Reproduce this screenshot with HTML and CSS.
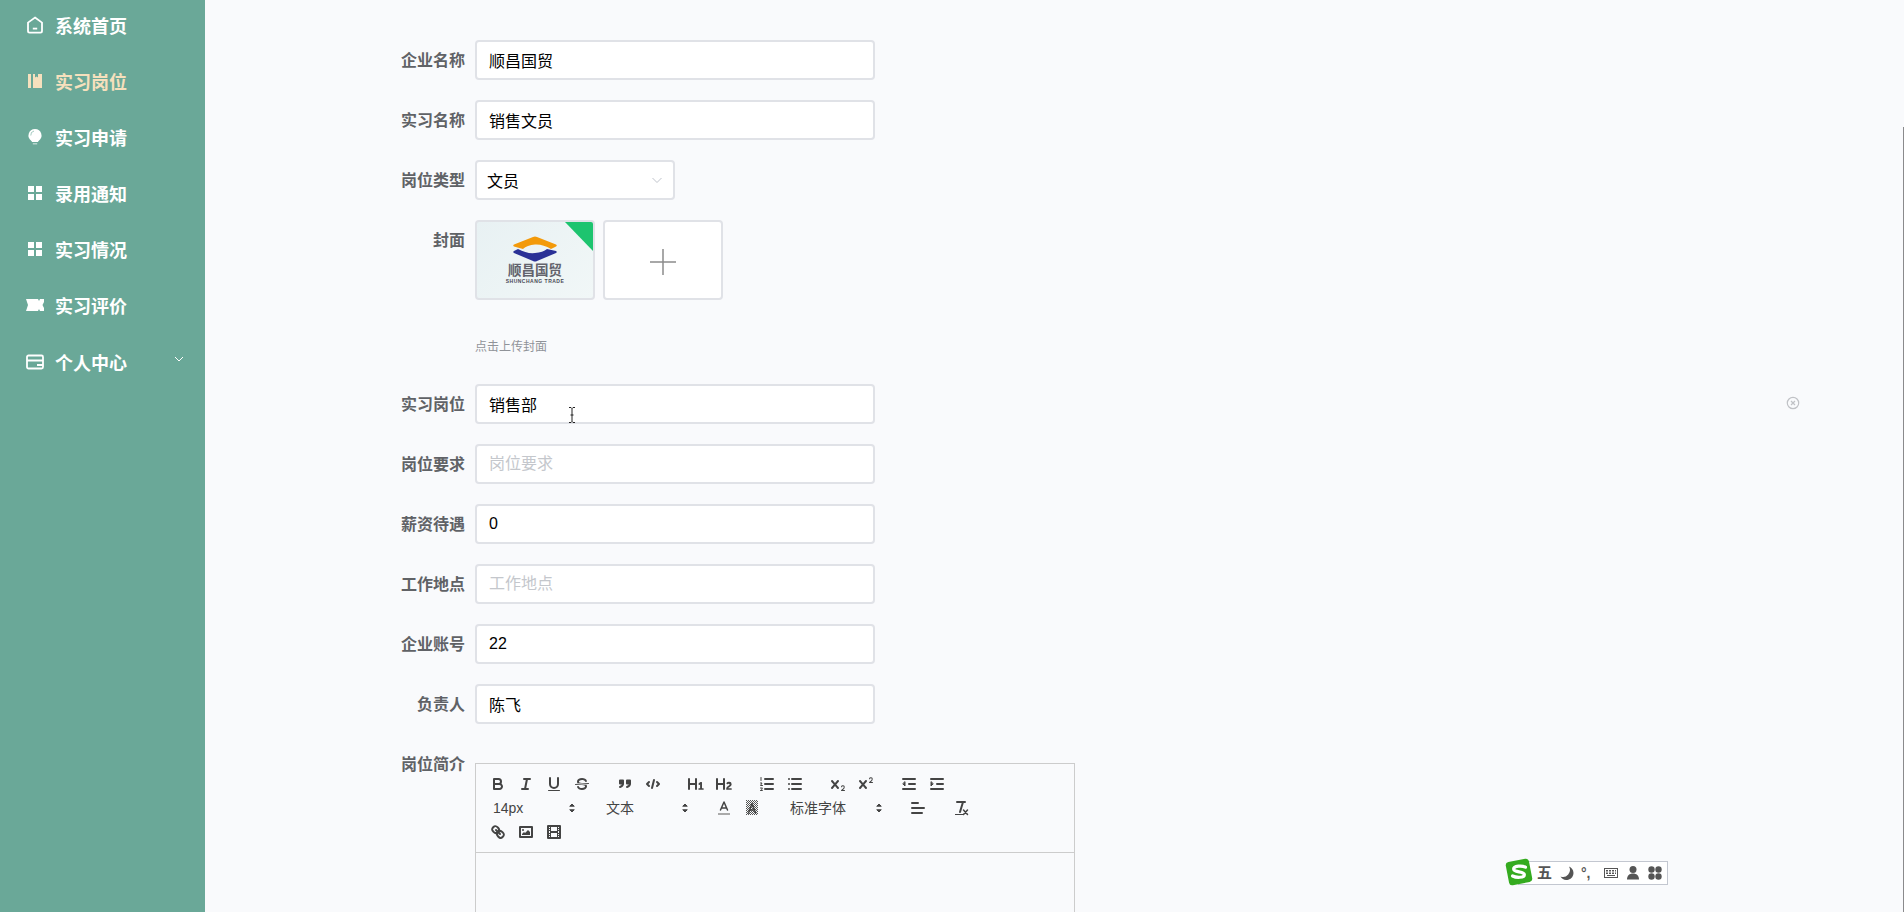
FILE: index.html
```html
<!DOCTYPE html>
<html lang="zh-CN">
<head>
    <meta charset="UTF-8">
    <meta name="viewport" content="width=device-width, initial-scale=1.0">
    <title>实习岗位</title>
    <link rel="stylesheet" href="styles.css">
</head>
<body>
    <div class="app">
        <aside class="sidebar">
            <a class="menu-item">
                <svg class="menu-icon" viewBox="0 0 18 18"><path class="icon-line" d="M9 1.500 16 6.600V15a1.600 1.600 0 0 1-1.600 1.600H3.600A1.600 1.600 0 0 1 2 15V6.600Z"/><path class="icon-line" d="M6.800 12.600h4.400"/></svg>
                <span>系统首页</span>
            </a>
            <a class="menu-item active">
                <svg class="menu-icon" viewBox="0 0 18 18"><path class="icon-solid" d="M2 2h3v14H2ZM7 2h2v3.500l1.500-1 1.500 1V2h4v14H7Z"/></svg>
                <span>实习岗位</span>
            </a>
            <a class="menu-item">
                <svg class="menu-icon" viewBox="0 0 18 18"><path class="icon-solid" d="M9 1a6.500 6.500 0 0 1 3.600 11.900c-.4.300-.6.700-.6 1.100H6c0-.4-.2-.8-.6-1.100A6.500 6.500 0 0 1 9 1ZM6.800 15.500h4.400v.8H6.800Z"/><path class="bulb-shine" d="M4.800 7.500A4.200 4.200 0 0 1 8 3"/></svg>
                <span>实习申请</span>
            </a>
            <a class="menu-item">
                <svg class="menu-icon" viewBox="0 0 18 18"><path class="icon-solid" d="M2 2h6v6H2ZM10 2h6v6h-6ZM2 10h6v6H2ZM10 10h6v6h-6Z"/></svg>
                <span>录用通知</span>
            </a>
            <a class="menu-item">
                <svg class="menu-icon" viewBox="0 0 18 18"><path class="icon-solid" d="M2 2h6v6H2ZM10 2h6v6h-6ZM2 10h6v6H2ZM10 10h6v6h-6Z"/></svg>
                <span>实习情况</span>
            </a>
            <a class="menu-item">
                <svg class="menu-icon" viewBox="0 0 18 18"><path class="icon-solid" d="M0 3h12l1 2 1-2h4v3l-1.500 3L18 12v3h-4l-1-2-1 2H0l2-6Z"/></svg>
                <span>实习评价</span>
            </a>
            <a class="menu-item menu-last">
                <svg class="menu-icon" viewBox="0 0 18 18"><rect class="icon-line" x="1" y="2.500" width="16" height="13" rx="1.500"/><path class="icon-line" d="M1 7.500h16M11 12h6"/></svg>
                <span>个人中心</span>
                <svg class="menu-arrow" viewBox="0 0 12 12"><path d="M2 4l4 4 4-4"/></svg>
            </a>
        </aside>

        <main class="main">
            <form class="form">
                <div class="form-row">
                    <label class="form-label">企业名称</label>
                    <input class="text-input" type="text" value="顺昌国贸">
                </div>
                <div class="form-row">
                    <label class="form-label">实习名称</label>
                    <input class="text-input" type="text" value="销售文员">
                </div>
                <div class="form-row">
                    <label class="form-label">岗位类型</label>
                    <div class="select-box">
                        <span>文员</span>
                        <svg class="select-arrow" viewBox="0 0 12 12"><path d="M1.500 4l4.500 4.500L10.500 4"/></svg>
                    </div>
                </div>
                <div class="form-row cover-row">
                    <label class="form-label">封面</label>
                    <div class="cover-field">
                        <div class="upload-list">
                            <div class="upload-thumb">
                                <svg class="thumb-logo" viewBox="0 0 44 26">
                                    <path fill="#f39a0a" d="M1 8.500 20 1q2-1 4 0l19 7.500q1.500 1 0 2l-5 2.500Q30 8 22 8.500 14 9 10 13L1 10.500q-1.500-1 0-2Z"/>
                                    <path fill="#2a3196" d="M1 15 5 13q9 5 17 4 8-.5 12-4l9 2q1.500 1 0 2L24 25q-2 1-4 0L1 17q-1.500-1 0-2Z"/>
                                </svg>
                                <span class="thumb-name">顺昌国贸</span>
                                <span class="thumb-en">SHUNCHANG TRADE</span>
                                <span class="thumb-flag"></span>
                            </div>
                            <div class="upload-add">
                                <svg class="upload-plus" viewBox="0 0 28 28"><path d="M14 1v26M1 14h26"/></svg>
                            </div>
                        </div>
                        <div class="upload-tip">点击上传封面</div>
                    </div>
                </div>
                <div class="form-row">
                    <label class="form-label">实习岗位</label>
                    <input class="text-input" type="text" value="销售部">
                </div>
                <div class="form-row">
                    <label class="form-label">岗位要求</label>
                    <input class="text-input" type="text" placeholder="岗位要求">
                </div>
                <div class="form-row">
                    <label class="form-label">薪资待遇</label>
                    <input class="text-input" type="text" value="0">
                </div>
                <div class="form-row">
                    <label class="form-label">工作地点</label>
                    <input class="text-input" type="text" placeholder="工作地点">
                </div>
                <div class="form-row">
                    <label class="form-label">企业账号</label>
                    <input class="text-input" type="text" value="22">
                </div>
                <div class="form-row">
                    <label class="form-label">负责人</label>
                    <input class="text-input" type="text" value="陈飞">
                </div>
                <div class="form-row">
                    <label class="form-label">岗位简介</label>
                    <div class="editor">
                        <div class="toolbar">
                            <span class="tool-group">
                                <button type="button" class="tool"><svg viewBox="0 0 18 18"><path class="st" d="M5,4H9.500A2.500,2.500,0,0,1,12,6.500v0A2.500,2.500,0,0,1,9.500,9H5A0,0,0,0,1,5,9V4A0,0,0,0,1,5,4Z"/><path class="st" d="M5,9h5.500A2.500,2.500,0,0,1,13,11.500v0A2.500,2.500,0,0,1,10.500,14H5a0,0,0,0,1,0,0V9A0,0,0,0,1,5,9Z"/></svg></button>
                                <button type="button" class="tool"><svg viewBox="0 0 18 18"><path class="st" d="M7 4h6M5 14h6M8 14l2-10"/></svg></button>
                                <button type="button" class="tool"><svg viewBox="0 0 18 18"><path class="st" d="M5,3V9a4.012,4.012,0,0,0,4,4H9a4.012,4.012,0,0,0,4-4V3"/><rect class="fl" x="3" y="15" width="12" height="1" rx=".5"/></svg></button>
                                <button type="button" class="tool"><svg viewBox="0 0 18 18"><path class="st thin" d="M15.500 8.500 2.500 9.500"/><path class="fl" d="M9.007,8C6.542,7.791,6,7.519,6,6.500,6,5.792,7.283,5,9,5c1.571,0,2.765.679,2.969,1.309a1,1,0,0,0,1.900-.617C13.356,4.106,11.354,3,9,3,6.200,3,4,4.538,4,6.500a3.200,3.200,0,0,0,.5,1.843Z"/><path class="fl" d="M8.984,10C11.457,10.208,12,10.479,12,11.500c0,.708-1.283,1.500-3,1.500-1.571,0-2.765-.679-2.969-1.309a1,1,0,1,0-1.900.617C4.644,13.894,6.646,15,9,15c2.800,0,5-1.538,5-3.500a3.200,3.200,0,0,0-.5-1.843Z"/></svg></button>
                            </span>
                            <span class="tool-group">
                                <button type="button" class="tool"><svg viewBox="0 0 18 18"><rect class="fl st" x="4" y="5.500" width="3" height="3"/><rect class="fl st" x="11" y="5.500" width="3" height="3"/><path class="st" d="M7,8.500c0,2.500-3,3.500-3,3.500M14,8.500c0,2.500-3,3.500-3,3.500"/></svg></button>
                                <button type="button" class="tool"><svg viewBox="0 0 18 18"><path class="st" d="M5 7 3 9l2 2M13 7l2 2-2 2M10 5 8 13"/></svg></button>
                            </span>
                            <span class="tool-group">
                                <button type="button" class="tool"><svg viewBox="0 0 18 18"><path class="fl" d="M10,4V14a1,1,0,0,1-2,0V10H3v4a1,1,0,0,1-2,0V4A1,1,0,0,1,3,4V8H8V4a1,1,0,0,1,2,0Zm6.068,9.209H14.990V7.599a.541.541,0,0,0-.605-.605h-.627a1.011,1.011,0,0,0-.748.297L11.645,8.566a.544.544,0,0,0-.022.858l.286.308a.539.539,0,0,0,.847.033l.099-.088a1.214,1.214,0,0,0,.242-.353h.022s-.011.309-.011.605V13.209H12.041a.541.541,0,0,0-.605.605v.439a.541.541,0,0,0,.605.606h4.027a.541.541,0,0,0,.605-.606v-.439A.541.541,0,0,0,16.068,13.209Z"/></svg></button>
                                <button type="button" class="tool"><svg viewBox="0 0 18 18"><path class="fl" d="M16.740,13.814v.439a.541.541,0,0,1-.605.606H11.855a.584.584,0,0,1-.649-.606V14.013c0-2.905,3.399-3.422,3.399-4.555a.777.777,0,0,0-.847-.781,1.177,1.177,0,0,0-.836.385c-.275.264-.561.374-.858.132l-.429-.341c-.308-.242-.385-.518-.154-.814a2.972,2.972,0,0,1,2.454-1.177,2.454,2.454,0,0,1,2.684,2.409c0,2.453-3.179,2.927-3.278,3.938h2.794A.541.541,0,0,1,16.740,13.814ZM9,3A1,1,0,0,0,8,4V8H3V4A1,1,0,0,0,1,4V14a1,1,0,0,0,2,0V10H8v4a1,1,0,0,0,2,0V4A1,1,0,0,0,9,3Z"/></svg></button>
                            </span>
                            <span class="tool-group">
                                <button type="button" class="tool"><svg viewBox="0 0 18 18"><path class="st" d="M7 4h8M7 9h8M7 14h8"/><path class="st thin" d="M3 2.500v3M2.500 8h1.500l-1.500 2.500h2M2.500 13h2l-1 1.200 1 1.300h-2"/></svg></button>
                                <button type="button" class="tool"><svg viewBox="0 0 18 18"><path class="st" d="M6 4h9M6 9h9M6 14h9M3 4h0M3 9h0M3 14h0"/></svg></button>
                            </span>
                            <span class="tool-group">
                                <button type="button" class="tool"><svg viewBox="0 0 18 18"><path class="fl" d="M15.500,15H13.861a3.858,3.858,0,0,0,1.914-2.975,1.800,1.800,0,0,0-1.600-1.751A1.921,1.921,0,0,0,12.021,11.700a.5.5,0,1,0,.957.291h0a.914.914,0,0,1,1.053-.725.810.810,0,0,1,.744.762c0,1.076-1.170,1.870-1.940,2.431A1.456,1.456,0,0,0,12,15.500a.5.5,0,0,0,.5.5h3A.5.5,0,0,0,15.500,15Z"/><path class="fl" d="M9.650,5.241a1,1,0,0,0-1.409.108L6,7.964,3.759,5.349A1,1,0,0,0,2.241,6.651L4.684,9.500,2.241,12.350a1,1,0,0,0,1.519,1.300L6,11.036l2.241,2.614a1,1,0,0,0,1.518-1.300L7.316,9.500,9.759,6.651A1,1,0,0,0,9.650,5.241Z"/></svg></button>
                                <button type="button" class="tool"><svg viewBox="0 0 18 18"><path class="fl" d="M15.500,7H13.861a4.015,4.015,0,0,0,1.914-2.975,1.800,1.800,0,0,0-1.600-1.751A1.922,1.922,0,0,0,12.021,3.700a.5.5,0,1,0,.957.291.917.917,0,0,1,1.053-.725.810.810,0,0,1,.744.762c0,1.077-1.164,1.925-1.934,2.486A1.423,1.423,0,0,0,12,7.500a.5.5,0,0,0,.5.5h3A.5.5,0,0,0,15.500,7Z"/><path class="fl" d="M9.651,5.241a1,1,0,0,0-1.410.108L6,7.964,3.759,5.349a1,1,0,1,0-1.519,1.300L4.683,9.500,2.241,12.350a1,1,0,1,0,1.519,1.300L6,11.036l2.241,2.615a1,1,0,0,0,1.519-1.300L7.317,9.500,9.759,6.651A1,1,0,0,0,9.651,5.241Z"/></svg></button>
                            </span>
                            <span class="tool-group">
                                <button type="button" class="tool"><svg viewBox="0 0 18 18"><path class="st" d="M3 14h12M3 4h12M9 9h6"/><path class="fl st thin" d="M5 7v4L3 9Z"/></svg></button>
                                <button type="button" class="tool"><svg viewBox="0 0 18 18"><path class="st" d="M3 14h12M3 4h12M9 9h6"/><path class="fl st thin" d="M3 7v4l2-2Z"/></svg></button>
                            </span>
                            <span class="tool-group">
                                <span class="picker">14px<svg viewBox="0 0 18 18"><path class="fl st thin" d="M7 11l2 2 2-2ZM7 7l2-2 2 2Z"/></svg></span>
                                <span class="picker picker-gap">文本<svg viewBox="0 0 18 18"><path class="fl st thin" d="M7 11l2 2 2-2ZM7 7l2-2 2 2Z"/></svg></span>
                            </span>
                            <span class="tool-group">
                                <button type="button" class="tool"><svg viewBox="0 0 18 18"><path class="color-bar" d="M3 15h12"/><path class="st mid" d="M5.500 11 9 3l3.500 8M11.630 9H6.380"/></svg></button>
                                <button type="button" class="tool"><svg viewBox="0 0 18 18"><defs><pattern id="hatch" width="2" height="2" patternUnits="userSpaceOnUse"><rect width="1" height="1" fill="#555"/><rect x="1" y="1" width="1" height="1" fill="#555"/></pattern></defs><rect x="3" y="1" width="12" height="15" fill="url(#hatch)"/><path class="st mid" d="M5.500 14 9 4.500l3.500 9.500M11.630 11H6.380"/></svg></button>
                            </span>
                            <span class="tool-group">
                                <span class="picker picker-font">标准字体<svg viewBox="0 0 18 18"><path class="fl st thin" d="M7 11l2 2 2-2ZM7 7l2-2 2 2Z"/></svg></span>
                            </span>
                            <span class="tool-group">
                                <button type="button" class="tool"><svg viewBox="0 0 18 18"><path class="st" d="M3 9h12M3 14h10M3 4h6"/></svg></button>
                            </span>
                            <span class="tool-group">
                                <button type="button" class="tool"><svg viewBox="0 0 18 18"><path class="st" d="M5 3h8M11 3 8 13"/><rect class="fl" x="3" y="15" width="8" height="1"/><path class="st mid" d="M11.500 11l4 4.500M15.500 11l-4 4.500"/></svg></button>
                            </span>
                            <span class="tool-group">
                                <button type="button" class="tool"><svg viewBox="0 0 18 18"><path class="st" d="M7 7l4 4"/><path class="st" d="M8.900,4.577a3.476,3.476,0,0,1,.36,4.679A3.476,3.476,0,0,1,4.577,8.900C3.185,7.500,2.035,6.400,4.217,4.217S7.500,3.185,8.900,4.577Z"/><path class="st" d="M13.423,9.100a3.476,3.476,0,0,0-4.679-.36,3.476,3.476,0,0,0,.36,4.679c1.392,1.392,2.500,2.542,4.679.36S14.815,10.500,13.423,9.100Z"/></svg></button>
                                <button type="button" class="tool"><svg viewBox="0 0 18 18"><rect class="st" x="3" y="4" width="12" height="10"/><circle class="fl" cx="6" cy="7" r="1"/><path class="fl" d="M5 12v-1l2-2 1 1 3-3 2 2v3Z"/></svg></button>
                                <button type="button" class="tool"><svg viewBox="0 0 18 18"><rect class="st" x="3" y="3" width="12" height="12"/><path class="fl" d="M5 3h1v12H5ZM12 3h1v12h-1ZM5 8h8v2H5ZM3 5h3v1H3ZM3 7h3v1H3ZM3 10h3v1H3ZM3 12h3v1H3ZM12 5h3v1h-3ZM12 7h3v1h-3ZM12 10h3v1h-3ZM12 12h3v1h-3Z"/></svg></button>
                            </span>
                        </div>
                        <div class="editor-body"></div>
                    </div>
                </div>
            </form>
        </main>
    </div>

    <!-- things lying over the page: text cursor, stray clear icon, scrollbar, IME bar -->
    <svg class="text-cursor" viewBox="0 0 8 16"><path d="M1 .5h2l1 1 1-1h2M4 1.500v13M1 15.500h2l1-1 1 1h2M2.500 8h3"/></svg>
    <svg class="clear-icon" viewBox="0 0 14 14"><circle cx="7" cy="7" r="5.700"/><path d="M5 5l4 4M9 5l-4 4"/></svg>
    <div class="scroll-line"></div>
    <div class="ime-bar">
        <svg class="ime-logo" viewBox="0 0 28 28"><rect x="3" y="3" width="22" height="22" rx="3" transform="rotate(-11 14 14)"/><path d="M20 9.500c-3-1.500-11-1.500-11 1.800 0 3.400 10 1.800 10 5.200 0 3-7.500 3-11 1.200"/></svg>
        <span class="ime-wu">五</span>
        <svg class="ime-icon" viewBox="0 0 16 16"><path d="M10 1.500a7 7 0 0 1-8.500 10A7 7 0 0 0 14.500 8c0-3-2-5.500-4.500-6.500Z"/></svg>
        <span class="ime-punct">°,</span>
        <svg class="ime-icon" viewBox="0 0 16 16"><path fill-rule="evenodd" d="M1 3h14v10H1ZM2 4v8h12V4ZM3 5h2v1.500H3ZM6 5h2v1.500H6ZM9 5h2v1.500H9ZM12 5h1v1.500h-1ZM3 7.500h2V9H3ZM6 7.500h2V9H6ZM9 7.500h2V9H9ZM12 7.500h1V9h-1ZM4 10h8v1H4Z"/></svg>
        <svg class="ime-icon" viewBox="0 0 16 16"><circle cx="8" cy="4.500" r="3.500"/><path d="M2 14.500c0-4 2.500-6 6-6s6 2 6 6Z"/></svg>
        <svg class="ime-icon" viewBox="0 0 16 16"><circle cx="4.500" cy="4.500" r="3.200"/><circle cx="11.500" cy="4.500" r="3.200"/><circle cx="4.500" cy="11.500" r="3.200"/><circle cx="11.500" cy="11.500" r="3.200"/></svg>
    </div>
</body>
</html>
```

FILE: styles.css
```css
* {
    box-sizing: border-box;
}

html, body {
    height: 100%;
    margin: 0;
    overflow: hidden;
}

body {
    font-family: "Liberation Sans", "Noto Sans CJK SC", sans-serif;
    background: #f9fafc;
}

.app {
    display: flex;
    height: 912px;
    overflow: hidden;
}

/* sidebar */
.sidebar {
    width: 205px;
    flex-shrink: 0;
    margin-top: -3px;
    background: #6aa898;
}

.menu-item {
    display: flex;
    align-items: center;
    gap: 11px;
    height: 56px;
    padding-left: 26px;
    color: #fff;
    font-size: 18px;
    font-weight: 700;
}

.menu-item.active {
    color: #f6e0bd;
}

.menu-last {
    margin-top: 1px;
}

.menu-icon {
    width: 18px;
    height: 18px;
    flex-shrink: 0;
}

.icon-line {
    fill: none;
    stroke: currentColor;
    stroke-width: 1.800;
}

.icon-solid {
    fill: currentColor;
}

.bulb-shine {
    fill: none;
    stroke: #6aa898;
    stroke-width: .6;
}

.menu-arrow {
    width: 12px;
    height: 12px;
    margin-left: 35px;
    margin-top: -6px;
    fill: none;
    stroke: #fff;
    stroke-width: 1;
}

/* form */
.main {
    flex: 1;
    min-width: 0;
    padding-top: 40px;
    overflow: hidden;
}

.form {
    margin-left: 180px;
}

.form-row {
    display: flex;
    gap: 10px;
    margin-bottom: 20px;
}

.form-label {
    width: 80px;
    height: 40px;
    flex-shrink: 0;
    line-height: 42px;
    text-align: right;
    color: #606266;
    font-size: 16px;
    font-weight: 700;
}

.text-input {
    width: 400px;
    height: 40px;
    padding: 0 12px;
    border: 2px solid #e0e2e7;
    border-radius: 4px;
    outline: none;
    background: #fff;
    color: #000;
    font-family: inherit;
    font-size: 16px;
}

.text-input::placeholder {
    color: #c4c7cc;
}

.select-box {
    display: flex;
    align-items: center;
    justify-content: space-between;
    width: 200px;
    height: 40px;
    padding: 0 10px 0 10px;
    border: 2px solid #e0e2e7;
    border-radius: 4px;
    background: #fff;
    color: #000;
    font-size: 16px;
}

.select-arrow {
    width: 12px;
    height: 12px;
    fill: none;
    stroke: #c0c4cc;
    stroke-width: 1;
}

/* cover upload */
.cover-row {
    margin-bottom: 27px;
}

.upload-list {
    display: flex;
    gap: 8px;
}

.upload-thumb {
    position: relative;
    display: flex;
    flex-direction: column;
    align-items: center;
    width: 120px;
    height: 80px;
    padding-top: 14px;
    overflow: hidden;
    border: 2px solid #e0e2e7;
    border-radius: 4px;
    background: linear-gradient(135deg, #e8f1f3, #f1f7f7);
}

.thumb-logo {
    width: 44px;
    height: 26px;
    flex-shrink: 0;
}

.thumb-name {
    margin-top: 2px;
    color: #4a4a55;
    font-size: 13.500px;
    line-height: 14px;
    font-weight: 700;
    opacity: .85;
}

.thumb-en {
    color: #4a4a55;
    font-size: 5px;
    line-height: 6px;
    letter-spacing: .5px;
    font-weight: 700;
}

.thumb-flag {
    position: absolute;
    top: 0;
    right: 0;
    width: 0;
    height: 0;
    border-top: 29px solid #1dc46f;
    border-left: 28px solid transparent;
}

.upload-add {
    display: flex;
    align-items: center;
    justify-content: center;
    width: 120px;
    height: 80px;
    padding-top: 3px;
    border: 2px solid #e0e2e7;
    border-radius: 4px;
    background: #fff;
}

.upload-plus {
    width: 28px;
    height: 28px;
    fill: none;
    stroke: #8c8c8c;
    stroke-width: 1.500;
}

.upload-tip {
    margin-top: 37px;
    color: #909399;
    font-size: 12px;
    line-height: 20px;
}

/* rich text editor */
.editor {
    width: 600px;
    margin-top: 19px;
    border: 1px solid #ccc;
}

.toolbar {
    display: flex;
    flex-wrap: wrap;
    padding: 8px;
    border-bottom: 1px solid #ccc;
    color: #444;
    font-size: 14px;
}

.tool-group {
    display: flex;
    margin-right: 15px;
}

.tool {
    width: 28px;
    height: 24px;
    padding: 3px 5px;
    border: none;
    background: none;
}

.tool svg {
    display: block;
    width: 18px;
    height: 18px;
}

.st {
    fill: none;
    stroke: #444;
    stroke-width: 2;
    stroke-linecap: round;
    stroke-linejoin: round;
}

.fl {
    fill: #444;
}

.st.fl {
    fill: #444;
}

.st.thin {
    stroke-width: 1;
}

.st.mid {
    stroke-width: 1.500;
}

.color-bar {
    fill: none;
    stroke: #aaa;
    stroke-width: 2;
}

.picker {
    display: flex;
    align-items: center;
    justify-content: space-between;
    width: 98px;
    height: 24px;
    padding-left: 9px;
    line-height: 24px;
}

.picker svg {
    width: 18px;
    height: 18px;
    margin-right: 1px;
}

.picker-gap {
    margin-left: 15px;
}

.picker-font {
    width: 108px;
}

.editor-body {
    height: 200px;
}

/* overlays */
.text-cursor {
    position: absolute;
    left: 568px;
    top: 407px;
    width: 8px;
    height: 16px;
    fill: none;
    stroke: #222;
    stroke-width: 1;
}

.clear-icon {
    position: absolute;
    left: 1786px;
    top: 396px;
    width: 14px;
    height: 14px;
    fill: none;
    stroke: #c0c2c6;
    stroke-width: 1.200;
}

.scroll-line {
    position: absolute;
    top: 127px;
    right: 0;
    bottom: 0;
    width: 1px;
    background: #8a8a8c;
}

.ime-bar {
    position: absolute;
    left: 1518px;
    top: 861px;
    display: flex;
    align-items: center;
    gap: 4px;
    width: 150px;
    height: 24px;
    padding-left: 18px;
    border: 1px solid #c3c7d0;
    background: #fff;
    color: #555;
}

.ime-logo {
    position: absolute;
    left: -15px;
    top: -5px;
    width: 30px;
    height: 30px;
}

.ime-logo rect {
    fill: #35ab1f;
}

.ime-logo path {
    fill: none;
    stroke: #fff;
    stroke-width: 3;
    stroke-linecap: round;
}

.ime-wu {
    width: 16px;
    font-size: 15px;
    font-weight: 700;
    line-height: 22px;
}

.ime-icon {
    width: 16px;
    height: 16px;
    margin-left: 2px;
    fill: #555;
}

.ime-punct {
    width: 16px;
    margin-left: 2px;
    font-size: 14px;
    font-weight: 700;
    line-height: 22px;
}
```
